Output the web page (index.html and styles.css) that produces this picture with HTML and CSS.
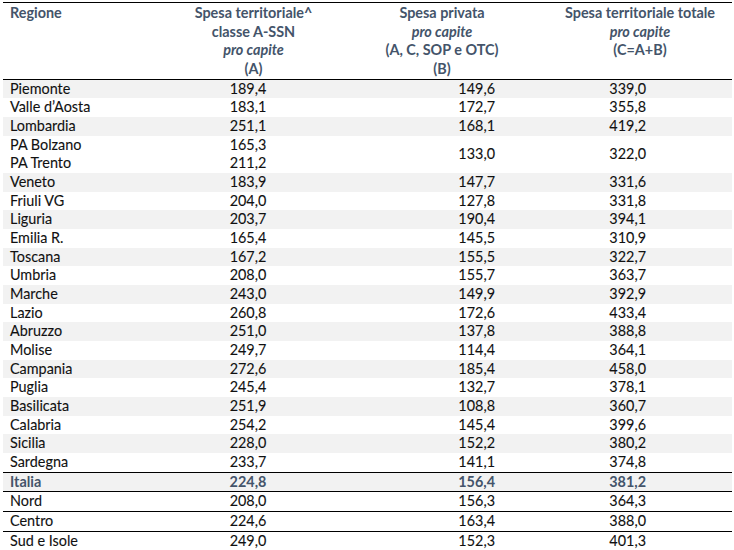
FILE: index.html
```html
<!DOCTYPE html>
<html lang="it">
<head>
<meta charset="utf-8">
<title>Spesa territoriale pro capite</title>
<link rel="stylesheet" href="styles.css">
</head>
<body>
<table class="tbl">
  <colgroup>
    <col class="c1"><col class="c2"><col class="c3"><col class="c4">
  </colgroup>
  <thead>
    <tr class="head">
      <th class="h-reg">Regione</th>
      <th class="h-a">Spesa territoriale^<br>classe A-SSN<br><i>pro capite</i><br>(A)</th>
      <th class="h-b">Spesa privata<br><i>pro capite</i><br>(A, C, SOP e OTC)<br>(B)</th>
      <th class="h-c">Spesa territoriale totale<br><i>pro capite</i><br>(C=A+B)<br>&nbsp;</th>
    </tr>
  </thead>
  <tbody>
    <tr class="g"><td class="reg">Piemonte</td><td class="na">189,4</td><td class="nb">149,6</td><td class="nc">339,0</td></tr>
    <tr><td class="reg">Valle d’Aosta</td><td class="na">183,1</td><td class="nb">172,7</td><td class="nc">355,8</td></tr>
    <tr class="g"><td class="reg">Lombardia</td><td class="na">251,1</td><td class="nb">168,1</td><td class="nc">419,2</td></tr>
    <tr><td class="reg">PA Bolzano</td><td class="na">165,3</td><td class="nb" rowspan="2">133,0</td><td class="nc" rowspan="2">322,0</td></tr>
    <tr><td class="reg">PA Trento</td><td class="na">211,2</td></tr>
    <tr class="g"><td class="reg">Veneto</td><td class="na">183,9</td><td class="nb">147,7</td><td class="nc">331,6</td></tr>
    <tr><td class="reg">Friuli VG</td><td class="na">204,0</td><td class="nb">127,8</td><td class="nc">331,8</td></tr>
    <tr class="g"><td class="reg">Liguria</td><td class="na">203,7</td><td class="nb">190,4</td><td class="nc">394,1</td></tr>
    <tr><td class="reg">Emilia R.</td><td class="na">165,4</td><td class="nb">145,5</td><td class="nc">310,9</td></tr>
    <tr class="g"><td class="reg">Toscana</td><td class="na">167,2</td><td class="nb">155,5</td><td class="nc">322,7</td></tr>
    <tr><td class="reg">Umbria</td><td class="na">208,0</td><td class="nb">155,7</td><td class="nc">363,7</td></tr>
    <tr class="g"><td class="reg">Marche</td><td class="na">243,0</td><td class="nb">149,9</td><td class="nc">392,9</td></tr>
    <tr><td class="reg">Lazio</td><td class="na">260,8</td><td class="nb">172,6</td><td class="nc">433,4</td></tr>
    <tr class="g"><td class="reg">Abruzzo</td><td class="na">251,0</td><td class="nb">137,8</td><td class="nc">388,8</td></tr>
    <tr><td class="reg">Molise</td><td class="na">249,7</td><td class="nb">114,4</td><td class="nc">364,1</td></tr>
    <tr class="g"><td class="reg">Campania</td><td class="na">272,6</td><td class="nb">185,4</td><td class="nc">458,0</td></tr>
    <tr><td class="reg">Puglia</td><td class="na">245,4</td><td class="nb">132,7</td><td class="nc">378,1</td></tr>
    <tr class="g"><td class="reg">Basilicata</td><td class="na">251,9</td><td class="nb">108,8</td><td class="nc">360,7</td></tr>
    <tr><td class="reg">Calabria</td><td class="na">254,2</td><td class="nb">145,4</td><td class="nc">399,6</td></tr>
    <tr class="g"><td class="reg">Sicilia</td><td class="na">228,0</td><td class="nb">152,2</td><td class="nc">380,2</td></tr>
    <tr><td class="reg">Sardegna</td><td class="na">233,7</td><td class="nb">141,1</td><td class="nc">374,8</td></tr>
    <tr class="g total"><td class="reg">Italia</td><td class="na">224,8</td><td class="nb">156,4</td><td class="nc">381,2</td></tr>
    <tr class="area"><td class="reg">Nord</td><td class="na">208,0</td><td class="nb">156,3</td><td class="nc">364,3</td></tr>
    <tr class="area"><td class="reg">Centro</td><td class="na">224,6</td><td class="nb">163,4</td><td class="nc">388,0</td></tr>
    <tr class="area"><td class="reg">Sud e Isole</td><td class="na">249,0</td><td class="nb">152,3</td><td class="nc">401,3</td></tr>
  </tbody>
</table>
</body>
</html>
```

FILE: styles.css
```css
html, body {
  margin: 0;
  padding: 0;
  background: #ffffff;
}

body {
  padding: 2px 0 0 3px;
  font-family: "Lato", "Liberation Sans", sans-serif;
  font-size: 14.4px;
  color: #111111;
}

.tbl {
  border-collapse: collapse;
  table-layout: fixed;
  width: 729px;
}

.c1 { width: 154px; }
.c2 { width: 193px; }
.c3 { width: 191px; }
.c4 { width: 191px; }

.tbl th,
.tbl td {
  padding: 0;
  line-height: 18.67px;
  height: 18.67px;
  white-space: nowrap;
  -webkit-text-stroke: 0.1px currentColor;
}

.head th {
  border-top: 1px solid #000;
  border-bottom: 1px solid #000;
  color: #44546a;
  font-weight: bold;
  vertical-align: top;
  padding-top: 1px;
  height: auto;
  -webkit-text-stroke: 0;
}

.head th i {
  font-style: italic;
}

.h-reg { text-align: left; padding-left: 7px !important; }
.h-a { text-align: center; }
.h-b { text-align: center; padding-right: 7px !important; }
.h-c { text-align: center; padding-left: 7px !important; }

.reg { text-align: left; padding-left: 7px !important; }
.na { text-align: center; padding-right: 11px !important; }
.nb { text-align: right; padding-right: 46px !important; }
.nc { text-align: right; padding-right: 86px !important; }

.g td { background: #f2f2f2; }

.total td {
  color: #44546a;
  font-weight: bold;
  border-top: 1px solid #000;
  border-bottom: 1px solid #000;
  -webkit-text-stroke: 0;
}

.area td {
  border-bottom: 1px solid #000;
}
```
